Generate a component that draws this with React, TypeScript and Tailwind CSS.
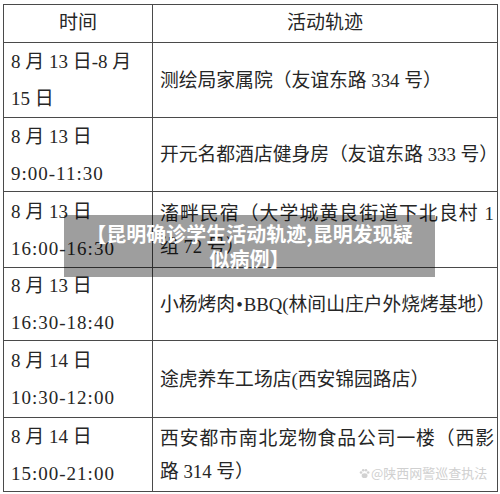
type Row = {
  height: string;
  time: string[];
  place: string[];
};

const rows: Row[] = [
  { height: 'h-[75px]', time: ['8 月 13 日-8 月', '15 日'], place: ['测绘局家属院（友谊东路 334 号）'] },
  { height: 'h-[74px]', time: ['8 月 13 日', '9:00-11:30'], place: ['开元名都酒店健身房（友谊东路 333 号）'] },
  { height: 'h-[76px]', time: ['8 月 13 日', '16:00-16:30'], place: ['滀畔民宿（大学城黄良街道下北良村 1', '组 72 号）'] },
  { height: 'h-[73px]', time: ['8 月 13 日', '16:30-18:40'], place: ['小杨烤肉•BBQ(林间山庄户外烧烤基地）'] },
  { height: 'h-[77px]', time: ['8 月 14 日', '10:30-12:00'], place: ['途虎养车工场店(西安锦园路店）'] },
  { height: 'h-[74px]', time: ['8 月 14 日', '15:00-21:00'], place: ['西安都市南北宠物食品公司一楼（西影', '路 314 号）'] },
];

const cellFont = "font-['Liberation_Serif','Noto_Sans_CJK_SC',serif] text-[19px] text-[#262626]";

const PawIcon = () => (
  <svg width="11" height="11" viewBox="0 0 12 12" fill="#d2d2d2">
    <circle cx="2.2" cy="5" r="1.4" />
    <circle cx="4.6" cy="2.4" r="1.4" />
    <circle cx="7.6" cy="2.4" r="1.4" />
    <circle cx="10" cy="5" r="1.4" />
    <ellipse cx="6.1" cy="8.4" rx="3.2" ry="2.6" />
  </svg>
);

// the bullet in the BBQ row carries a little room on both sides
const PlaceLine = ({ text }: { text: string }) => {
  if (!text.includes('•')) return <>{text}</>;
  const [before, after] = text.split('•');
  return (
    <span className="whitespace-nowrap">
      {before}
      <span className="px-[1px]">•</span>
      {after}
    </span>
  );
};

export default function App() {
  return (
    <div className="relative h-[494px] w-[500px] overflow-hidden bg-white">
      <div className="ml-[3px] mt-[4px] w-[495px] border-l border-t border-[#4a4a4a]">
        <div className={`grid grid-cols-[149px_345px] ${cellFont}`}>
          <div className="flex h-[38px] items-center justify-center border-b border-r border-[#4a4a4a]">时间</div>
          <div className="flex h-[38px] items-center justify-center border-b border-r border-[#4a4a4a]">活动轨迹</div>
          {rows.map((row) => (
            <div className="contents" key={row.time.join('') + row.place[0]}>
              <div className={`flex flex-col justify-center border-b border-r border-[#4a4a4a] pl-[7px] ${row.height}`}>
                {row.time.map((line, i) => (
                  <div className={i === 1 && line.includes(':') ? 'leading-[37px] tracking-[1px]' : 'leading-[37px]'} key={line}>
                    {line}
                  </div>
                ))}
              </div>
              <div className={`flex flex-col justify-center border-b border-r border-[#4a4a4a] pl-[7px] pr-[3px] text-[18.8px] ${row.height}`}>
                {row.place.map((line, i) => (
                  <div
                    className={
                      row.place.length > 1 && i === 0
                        ? 'text-justify leading-[33px] [text-align-last:justify]'
                        : 'leading-[33px]'
                    }
                    key={line}
                  >
                    <PlaceLine text={line} />
                  </div>
                ))}
              </div>
            </div>
          ))}
        </div>
      </div>

      <div className="absolute left-[64px] top-[215px] flex h-[62px] w-[371px] items-center justify-center bg-[rgba(0,0,0,0.38)]">
        <p className="text-center font-['Noto_Sans_CJK_SC',sans-serif] text-[20px] font-bold leading-[25px] text-white">
          【昆明确诊学生活动轨迹,昆明发现疑
          <br />
          似病例】
        </p>
      </div>

      <div className="absolute left-[359px] top-[465px] flex items-center gap-[1px] font-['Noto_Sans_CJK_SC',sans-serif] text-[13px] leading-[16px] text-[#d0d0d0]">
        <PawIcon />
        <span>@陕西网警巡查执法</span>
      </div>
    </div>
  );
}
